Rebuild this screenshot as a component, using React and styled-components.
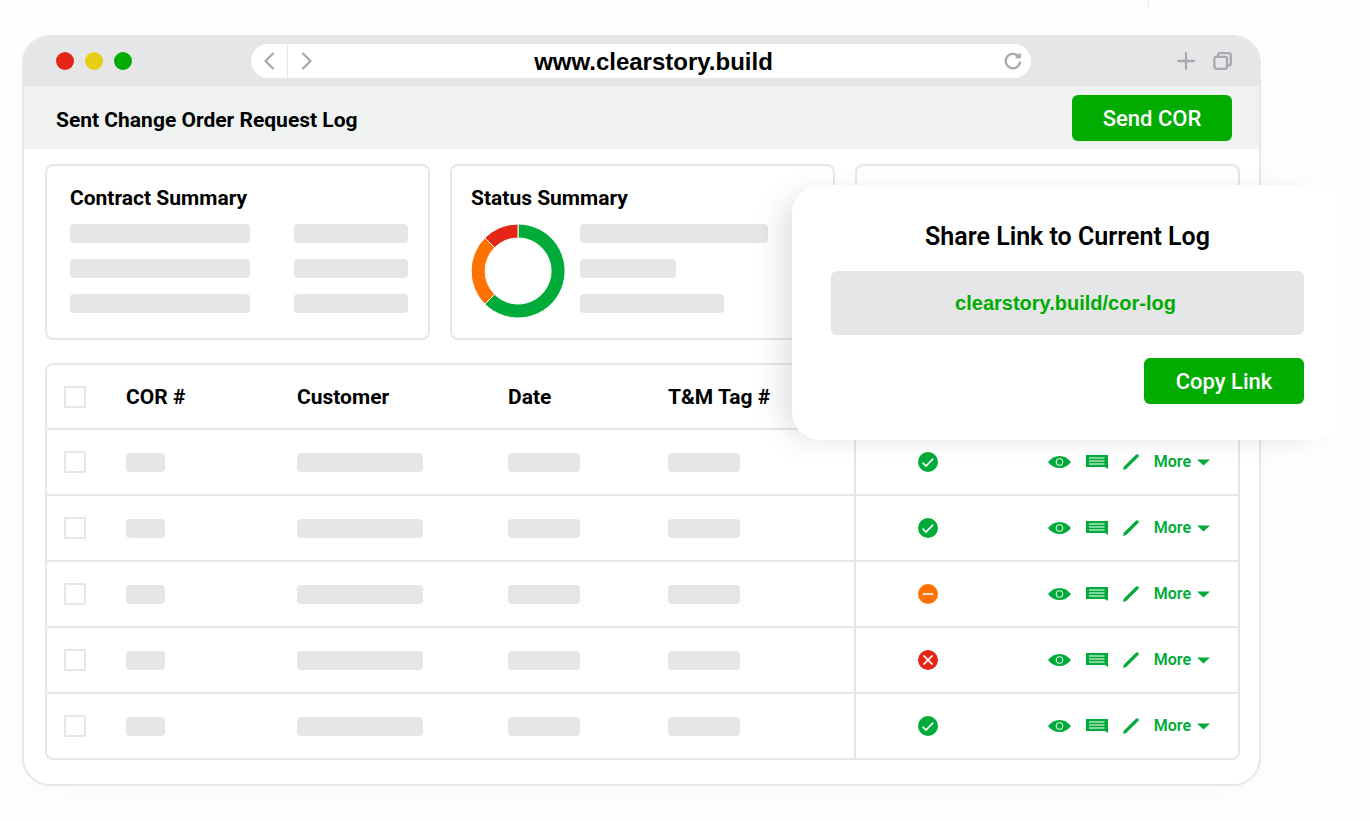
import React from 'react';
import styled, { createGlobalStyle } from 'styled-components';

const line = '#e6e7e8';
const fill = '#e5e6e8';
const brand = '#00ac00';
const green = '#00ab39';
const orange = '#ff7200';
const red = '#e42616';

const GlobalStyle = createGlobalStyle`
  * { box-sizing: border-box; }
  body {
    margin: 0;
    background: #fefefe;
    color: #000;
    font-family: Roboto, "Liberation Sans", sans-serif;
  }
  button { font: inherit; border: 0; padding: 0; background: none; cursor: pointer; }
  svg { display: block; }
`;

const Page = styled.main`
  padding: 0 109px 35px 22px;
`;

const TopStrip = styled.div`
  display: flex;
  justify-content: flex-end;
  height: 35px;
  padding-right: 112px;
`;

const Tick = styled.span`
  width: 1px;
  height: 8px;
  background: #ececec;
`;

const BrowserWindow = styled.section`
  position: relative;
  border: 2px solid ${line};
  border-radius: 28px;
  background: #fff;
  box-shadow: 0 8px 20px rgba(0, 0, 0, 0.02);
`;

const Chrome = styled.header`
  display: grid;
  grid-template-columns: 227px 1fr 228px;
  align-items: center;
  height: 49px;
  padding-bottom: 2px;
  border-radius: 26px 26px 0 0;
  background: ${fill};
`;

const Lights = styled.div`
  display: flex;
  gap: 11px;
  padding-left: 32px;
`;

const Light = styled.span`
  width: 18px;
  height: 18px;
  border-radius: 50%;
  background: ${(p) => p.$color};
`;

const AddressBar = styled.div`
  display: flex;
  height: 34px;
  border-radius: 17px;
  background: #fff;
  color: #a7a9ac;
  overflow: hidden;
`;

const NavButton = styled.button`
  display: flex;
  align-items: center;
  justify-content: center;
  flex: none;
  width: 37px;
  color: inherit;
  border-right: ${(p) => (p.$divided ? `1px solid ${line}` : '0')};
`;

const Address = styled.input`
  flex: 1;
  min-width: 0;
  border: 0;
  padding: 2px 12px 0 0;
  outline: 0;
  background: transparent;
  color: #000;
  text-align: center;
  font: bold 24px "Liberation Sans", Arial, sans-serif;
`;

const WindowActions = styled.div`
  display: flex;
  justify-content: flex-end;
  gap: 18px;
  padding-right: 27px;
  color: #a7a9ac;
  button { color: inherit; }
`;

const TitleBar = styled.div`
  display: flex;
  align-items: center;
  justify-content: space-between;
  height: 63px;
  padding: 0 27px 0 32px;
  background: #f0f2f1;
`;

const PageTitle = styled.h1`
  margin: 0;
  padding-top: 4px;
  font-size: 21px;
  line-height: 24px;
  font-weight: 700;
`;

const PrimaryButton = styled.button`
  width: 160px;
  height: 46px;
  border-radius: 6px;
  color: #fff;
  && {
    padding-top: 1px;
    background: ${brand};
    font-size: 22px;
    font-weight: 500;
  }
`;

const Content = styled.div`
  display: grid;
  gap: 23px;
  padding: 15px 19px 24px 21px;
`;

const Cards = styled.div`
  display: grid;
  grid-template-columns: repeat(3, minmax(0, 1fr));
  gap: 20px;
`;

const Card = styled.section`
  padding: 20px 20px 20px 23px;
  border: 2px solid ${line};
  border-radius: 8px;
`;

const StatusCard = styled(Card)`
  padding: 20px 19px;
`;

const CardTitle = styled.h2`
  margin: 0 0 14px;
  font-size: 21px;
  line-height: 24px;
  font-weight: 700;
`;

const SummaryGrid = styled.div`
  display: grid;
  grid-template-columns: 180px 114px;
  justify-content: start;
  gap: 16px 44px;
`;

const StatusBody = styled.div`
  display: flex;
  align-items: flex-start;
  gap: 15px;
`;

const BarStack = styled.div`
  display: grid;
  gap: 16px;
`;

const Bar = styled.div`
  width: ${(p) => p.$w}px;
  height: 19px;
  border-radius: 4px;
  background: ${fill};
`;

const TableFrame = styled.div`
  border: 2px solid ${line};
  border-radius: 8px;
`;

const Table = styled.table`
  width: 100%;
  table-layout: fixed;
  border-collapse: separate;
  border-spacing: 0;
  th, td {
    height: 66px;
    padding: 0;
    text-align: left;
    vertical-align: middle;
    border-bottom: 2px solid ${line};
  }
  th {
    height: 65px;
    font-size: 21px;
    line-height: 24px;
    font-weight: 700;
  }
  tbody tr:last-child td { height: 64px; border-bottom: 0; }
  th:nth-child(6), td:nth-child(6) { border-left: 2px solid ${line}; }
`;

const Col = styled.col`
  width: ${(p) => (p.$w ? `${p.$w}px` : 'auto')};
`;

const RowCheck = styled.input`
  display: block;
  appearance: none;
  width: 22px;
  height: 22px;
  margin: 0 0 0 17px;
  border: 2px solid ${line};
  background: #fff;
`;

const StatusMark = styled.div`
  display: flex;
  justify-content: center;
`;

const Actions = styled.div`
  display: flex;
  align-items: center;
  justify-content: flex-end;
  gap: 15px;
  padding-right: 28px;
  button { color: ${green}; }
`;

const MoreButton = styled.button`
  display: flex;
  align-items: center;
  gap: 6px;
  && { font-size: 16px; line-height: 18px; font-weight: 600; }
`;

const ShareDialog = styled.section`
  position: absolute;
  top: 148px;
  right: -84px;
  width: 551px;
  padding: 38px 39px 36px;
  border-radius: 28px;
  background: #fff;
  box-shadow: -16px 4px 32px -10px rgba(0, 0, 0, 0.15);
  display: flex;
  flex-direction: column;
`;

const DialogTitle = styled.h2`
  margin: 0 0 20px;
  text-align: center;
  font-size: 25px;
  line-height: 28px;
  font-weight: 600;
`;

const LinkBox = styled.a`
  display: flex;
  align-items: center;
  justify-content: center;
  height: 64px;
  margin-bottom: 23px;
  padding-right: 4px;
  border-radius: 6px;
  background: ${fill};
  color: ${brand};
  text-decoration: none;
  font: bold 20px "Liberation Sans", Arial, sans-serif;
`;

const DialogFooter = styled.div`
  display: flex;
  justify-content: flex-end;
`;

const stroke = { fill: 'none', stroke: 'currentColor', strokeWidth: 2.3, strokeLinecap: 'round', strokeLinejoin: 'round' };

const Chevron = ({ d }) => (
  <svg width="12" height="18" viewBox="0 0 12 18" {...stroke}><path d={d} /></svg>
);

const Reload = () => (
  <svg width="18" height="18" viewBox="0 0 18 18" {...stroke}>
    <path d="M16 10.5A7.2 7.2 0 1 1 14 4" />
    <path d="M16.2 1.6V5.6H12Z" fill="currentColor" strokeWidth="1.2" />
  </svg>
);

const Plus = () => (
  <svg width="18" height="18" viewBox="0 0 18 18" {...stroke}><path d="M9 1.2v15.6M1.2 9h15.6" /></svg>
);

const Windows = () => (
  <svg width="19" height="18" viewBox="0 0 19 18" {...stroke}>
    <rect x="1.4" y="4.8" width="12.6" height="12" rx="2" />
    <path d="M5 4.6V3.2a2 2 0 0 1 2-2h8.8a2 2 0 0 1 2 2v8.2a2 2 0 0 1-2 2h-1.6" />
  </svg>
);

const Donut = () => (
  <svg width="94" height="94" viewBox="-47 -47 94 94" role="img" aria-label="Status breakdown">
    <g stroke="#fff" strokeWidth="1">
      <path d="M0-47A47 47 0 1 1-33.2 33.2L-23.3 23.3A33 33 0 1 0 0-33Z" fill={green} />
      <path d="M-33.2 33.2A47 47 0 0 1-33.2-33.2L-23.3-23.3A33 33 0 0 0-23.3 23.3Z" fill={orange} />
      <path d="M-33.2-33.2A47 47 0 0 1 0-47V-33A33 33 0 0 0-23.3-23.3Z" fill={red} />
    </g>
  </svg>
);

const marks = {
  approved: { color: green, d: 'M4.6 10.6l3.4 3.4 7.2-7.4', label: 'Approved' },
  pending: { color: orange, d: 'M4.8 10h10.4', label: 'Pending' },
  rejected: { color: red, d: 'M5.4 5.4l9.2 9.2M14.6 5.4l-9.2 9.2', label: 'Rejected' },
};

const Mark = ({ kind }) => (
  <svg width="20" height="20" viewBox="0 0 20 20" role="img" aria-label={marks[kind].label}>
    <circle cx="10" cy="10" r="10" fill={marks[kind].color} />
    <path d={marks[kind].d} fill="none" stroke="#fff" strokeWidth="1.6" />
  </svg>
);

const Eye = () => (
  <svg width="23" height="12" viewBox="0 0 23 12">
    <path d="M0 6C3.2 2 7 0 11.5 0S19.8 2 23 6C19.8 10 16 12 11.5 12S3.2 10 0 6Z" fill="currentColor" />
    <circle cx="11.5" cy="6" r="3.4" fill="none" stroke="#fff" strokeWidth="1" />
  </svg>
);

const Comment = () => (
  <svg width="22" height="14" viewBox="0 0 22 14">
    <path d="M0 0H22V14L19 12H0Z" fill="currentColor" />
    <path d="M3 3H18.5M3 6H18.5M3 9H18.5" stroke="#fff" strokeWidth="1" />
  </svg>
);

const Pencil = () => (
  <svg width="16" height="16" viewBox="0 0 16 16">
    <path d="M0 16L.8 12.8L12.6 1Q14 -.4 15.3 .8Q16.4 2 15 3.3L3.2 15.1Z" fill="currentColor" />
  </svg>
);

const Caret = () => (
  <svg width="13" height="7" viewBox="0 0 13 7"><path d="M0 .5H13L6.5 6.5Z" fill="currentColor" /></svg>
);

const rows = ['approved', 'approved', 'pending', 'rejected', 'approved'];
const columns = [79, 171, 211, 160, 186, 145, 0];

export default function App() {
  return (
    <>
      <GlobalStyle />
      <Page>
        <TopStrip><Tick /></TopStrip>
        <BrowserWindow>
          <Chrome>
            <Lights>
              <Light $color={red} />
              <Light $color="#e9ce16" />
              <Light $color={brand} />
            </Lights>
            <AddressBar>
              <NavButton $divided aria-label="Back"><Chevron d="M10 1.5L2.5 9l7.5 7.5" /></NavButton>
              <NavButton aria-label="Forward"><Chevron d="M2 1.5l7.5 7.5-7.5 7.5" /></NavButton>
              <Address aria-label="Address" readOnly value="www.clearstory.build" />
              <NavButton aria-label="Reload"><Reload /></NavButton>
            </AddressBar>
            <WindowActions>
              <button aria-label="New tab"><Plus /></button>
              <button aria-label="Show tabs"><Windows /></button>
            </WindowActions>
          </Chrome>
          <TitleBar>
            <PageTitle>Sent Change Order Request Log</PageTitle>
            <PrimaryButton>Send COR</PrimaryButton>
          </TitleBar>
          <Content>
            <Cards>
              <Card>
                <CardTitle>Contract Summary</CardTitle>
                <SummaryGrid>
                  {[0, 1, 2].map((i) => (
                    <React.Fragment key={i}>
                      <Bar $w={180} />
                      <Bar $w={114} />
                    </React.Fragment>
                  ))}
                </SummaryGrid>
              </Card>
              <StatusCard>
                <CardTitle>Status Summary</CardTitle>
                <StatusBody>
                  <Donut />
                  <BarStack>
                    <Bar $w={188} />
                    <Bar $w={96} />
                    <Bar $w={144} />
                  </BarStack>
                </StatusBody>
              </StatusCard>
              <Card />
            </Cards>
            <TableFrame>
              <Table>
                <colgroup>
                  {columns.map((w, i) => <Col key={i} $w={w} />)}
                </colgroup>
                <thead>
                  <tr>
                    <th><RowCheck type="checkbox" aria-label="Select all" /></th>
                    <th>COR #</th>
                    <th>Customer</th>
                    <th>Date</th>
                    <th>T&amp;M Tag #</th>
                    <th aria-label="Status" />
                    <th aria-label="Actions" />
                  </tr>
                </thead>
                <tbody>
                  {rows.map((kind, i) => (
                    <tr key={i}>
                      <td><RowCheck type="checkbox" aria-label={`Select row ${i + 1}`} /></td>
                      <td><Bar $w={39} /></td>
                      <td><Bar $w={126} /></td>
                      <td><Bar $w={72} /></td>
                      <td><Bar $w={72} /></td>
                      <td><StatusMark><Mark kind={kind} /></StatusMark></td>
                      <td>
                        <Actions>
                          <button aria-label="View"><Eye /></button>
                          <button aria-label="Comment"><Comment /></button>
                          <button aria-label="Edit"><Pencil /></button>
                          <MoreButton>More <Caret /></MoreButton>
                        </Actions>
                      </td>
                    </tr>
                  ))}
                </tbody>
              </Table>
            </TableFrame>
          </Content>
          <ShareDialog role="dialog" aria-labelledby="share-title">
            <DialogTitle id="share-title">Share Link to Current Log</DialogTitle>
            <LinkBox href="#cor-log">clearstory.build/cor-log</LinkBox>
            <DialogFooter><PrimaryButton>Copy Link</PrimaryButton></DialogFooter>
          </ShareDialog>
        </BrowserWindow>
      </Page>
    </>
  );
}
